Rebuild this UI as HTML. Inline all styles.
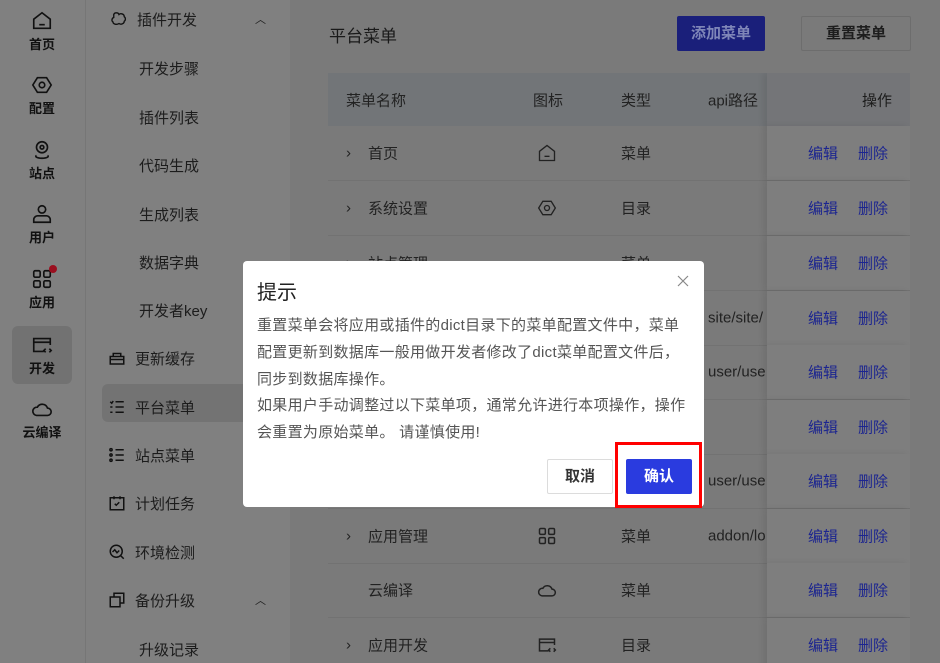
<!DOCTYPE html><html><head><meta charset="utf-8"><style>
*{box-sizing:border-box;margin:0;padding:0}
html,body{width:940px;height:663px;overflow:hidden}
body{position:relative;font-family:"Liberation Sans","Noto Sans CJK SC",sans-serif;background:#7b7b7b;color:#1a1a1a}
.abs{position:absolute}
.nav{left:0;top:0;width:86px;height:663px;background:#808080;border-right:1px solid #767676}
.ni{position:absolute;left:12px;width:60px;text-align:center;font-size:13px;color:#111;font-weight:bold}
.ni svg{display:block;margin:0 auto 2px}
.sub{left:86px;top:0;width:204px;height:663px;background:#808080}
.si{position:absolute;font-size:15px;color:#1c1c1c}
.si svg{vertical-align:-3px;margin-right:9px}
.main{left:290px;top:0;width:650px;height:663px;background:#7a7a7a}
.tbl{left:328px;top:73px;width:582px;height:590px;overflow:hidden}
.row{position:absolute;left:0;width:582px;height:55px;border-bottom:1px solid #727272;font-size:15px;color:#222}
.row span{position:absolute;top:50%;transform:translateY(-50%)}
.row span svg{display:block}
.op{position:absolute;left:439px;top:0;width:143px;height:100%;background:#7e7e7e;box-shadow:-4px 0 6px rgba(0,0,0,.08)}
.op b{position:absolute;top:50%;transform:translateY(-50%);font-weight:normal;color:#1c2590}
.dlg{left:243px;top:261px;width:461px;height:246px;background:#fff;border-radius:4px}
</style></head><body>
<div class="abs nav">
 <div class="ni" style="top:10px"><svg width="22" height="22" viewBox="0 0 24 24" fill="none" stroke="#111" stroke-width="1.8"><path d="M3 10l9-7 9 7v10H3z"/><path d="M9 16h6"/></svg>首页</div>
 <div class="ni" style="top:74px"><svg width="22" height="22" viewBox="0 0 24 24" fill="none" stroke="#111" stroke-width="1.8"><path d="M7 4h10l5 8-5 8H7l-5-8z"/><circle cx="12" cy="12" r="3"/></svg>配置</div>
 <div class="ni" style="top:139px"><svg width="22" height="22" viewBox="0 0 24 24" fill="none" stroke="#111" stroke-width="1.8"><circle cx="12" cy="9" r="6"/><circle cx="12" cy="9" r="2"/><path d="M6 18c-2 1 0 3 6 3s8-2 6-3"/></svg>站点</div>
 <div class="ni" style="top:203px"><svg width="22" height="22" viewBox="0 0 24 24" fill="none" stroke="#111" stroke-width="1.8"><circle cx="12" cy="7" r="4"/><path d="M3 21v-3c0-2 2-4 4-4h10c2 0 4 2 4 4v3z"/></svg>用户</div>
 <div class="ni" style="top:268px"><svg width="22" height="22" viewBox="0 0 24 24" fill="none" stroke="#111" stroke-width="1.8"><rect x="3" y="3" width="7" height="7" rx="1.5"/><rect x="14" y="3" width="7" height="7" rx="1.5"/><rect x="3" y="14" width="7" height="7" rx="1.5"/><rect x="14" y="14" width="7" height="7" rx="1.5"/></svg>应用<i class="abs" style="left:37px;top:-3px;width:8px;height:8px;border-radius:50%;background:#9a0f1f"></i></div>
 <div class="abs" style="left:12px;top:326px;width:60px;height:58px;background:#727272;border-radius:6px"></div>
 <div class="ni" style="top:334px"><svg width="22" height="22" viewBox="0 0 24 24" fill="none" stroke="#111" stroke-width="1.8"><path d="M21 12V5H3v14h11"/><path d="M3 9h18"/><path d="M16 16l-2 2 2 2M20 16l2 2-2 2"/></svg>开发</div>
 <div class="ni" style="top:398px"><svg width="22" height="22" viewBox="0 0 24 24" fill="none" stroke="#111" stroke-width="1.8"><path d="M6 19h12a4 4 0 0 0 0-8 6 6 0 0 0-11-1A4.5 4.5 0 0 0 6 19z"/></svg>云编译</div>
</div>
<div class="abs sub">
 <div class="si" style="left:24px;top:9px"><svg width="18" height="18" viewBox="0 0 24 24" fill="none" stroke="#111" stroke-width="1.8"><path d="M5 6c1-3 6-3 7 0 2-2 7-1 7 3 2 1 2 5 0 6 0 3-4 5-7 3-3 2-8 1-8-2-2-1-2-5 1-6z"/></svg>插件开发<span style="position:absolute;left:145px;top:2px;font-size:11px">︿</span></div>
 <div class="si" style="left:53px;top:58px">开发步骤</div>
 <div class="si" style="left:53px;top:107px">插件列表</div>
 <div class="si" style="left:53px;top:155px">代码生成</div>
 <div class="si" style="left:53px;top:204px">生成列表</div>
 <div class="si" style="left:53px;top:252px">数据字典</div>
 <div class="si" style="left:53px;top:300px">开发者key</div>
 <div class="si" style="left:22px;top:348px"><svg width="18" height="18" viewBox="0 0 24 24" fill="none" stroke="#111" stroke-width="2"><path d="M3 10h18v10H3zM7 10V6h10v4M3 14h18"/></svg>更新缓存</div>
 <div class="abs" style="left:16px;top:384px;width:188px;height:38px;background:#737373;border-radius:6px"></div>
 <div class="si" style="left:22px;top:397px"><svg width="18" height="18" viewBox="0 0 24 24" fill="none" stroke="#111" stroke-width="2"><path d="M10 5h11M10 12h11M10 19h11M3 5l2 2 2-3M3 12h3M3 19h3"/></svg>平台菜单</div>
 <div class="si" style="left:22px;top:445px"><svg width="18" height="18" viewBox="0 0 24 24" fill="none" stroke="#111" stroke-width="2"><path d="M10 5h11M10 12h11M10 19h11"/><circle cx="4" cy="5" r="1.5"/><circle cx="4" cy="12" r="1.5"/><circle cx="4" cy="19" r="1.5"/></svg>站点菜单</div>
 <div class="si" style="left:22px;top:493px"><svg width="18" height="18" viewBox="0 0 24 24" fill="none" stroke="#111" stroke-width="2"><rect x="3" y="5" width="18" height="16"/><path d="M8 3v4M16 3v4M9 13l2 2 4-4"/></svg>计划任务</div>
 <div class="si" style="left:22px;top:542px"><svg width="18" height="18" viewBox="0 0 24 24" fill="none" stroke="#111" stroke-width="2"><circle cx="11" cy="11" r="8"/><path d="M17 17l4 4M6 12l3-3 3 4 3-3"/></svg>环境检测</div>
 <div class="si" style="left:22px;top:590px"><svg width="18" height="18" viewBox="0 0 24 24" fill="none" stroke="#111" stroke-width="2"><rect x="3" y="8" width="13" height="13"/><path d="M8 8V3h13v13h-5"/></svg>备份升级<span style="position:absolute;left:147px;top:2px;font-size:11px">︿</span></div>
 <div class="si" style="left:53px;top:639px">升级记录</div>
</div>
<div class="abs main">
 <div class="abs" style="left:39px;top:22px;font-size:17px;color:#1a1a1a">平台菜单</div>
 <div class="abs" style="left:387px;top:16px;width:88px;height:35px;background:#1a1f7a;border-radius:2px;color:#7f86b8;font-size:15px;font-weight:bold;text-align:center;line-height:35px">添加菜单</div>
 <div class="abs" style="left:511px;top:16px;width:110px;height:35px;border:1px solid #6d6d6d;border-radius:2px;color:#1d1d1d;font-size:15px;font-weight:bold;text-align:center;line-height:33px">重置菜单</div>
</div>
<div class="abs tbl">
 <div class="row" style="top:0;height:53px;background:#727578;border:none"><span style="left:18px">菜单名称</span><span style="left:205px">图标</span><span style="left:293px">类型</span><span style="left:380px">api路径</span><div class="op" style="background:#747578"><b style="left:95px;color:#1c1c1c">操作</b></div></div>
 <div class="row" style="top:53px"><span style="left:18px">›</span><span style="left:40px">首页</span><span style="left:209px"><svg width="20" height="20" viewBox="0 0 24 24" fill="none" stroke="#222" stroke-width="1.6"><path d="M3 10l9-7 9 7v11H3z"/><path d="M9 16h6"/></svg></span><span style="left:293px">菜单</span><div class="op"><b style="left:41px">编辑</b><b style="left:91px">删除</b></div></div>
 <div class="row" style="top:108px"><span style="left:18px">›</span><span style="left:40px">系统设置</span><span style="left:209px"><svg width="20" height="20" viewBox="0 0 24 24" fill="none" stroke="#222" stroke-width="1.6"><path d="M7 4h10l5 8-5 8H7l-5-8z"/><circle cx="12" cy="12" r="3"/></svg></span><span style="left:293px">目录</span><div class="op"><b style="left:41px">编辑</b><b style="left:91px">删除</b></div></div>
 <div class="row" style="top:163px"><span style="left:18px">›</span><span style="left:40px">站点管理</span><span style="left:293px">菜单</span><div class="op"><b style="left:41px">编辑</b><b style="left:91px">删除</b></div></div>
 <div class="row" style="top:218px"><span style="left:380px">site/site/</span><div class="op"><b style="left:41px">编辑</b><b style="left:91px">删除</b></div></div>
 <div class="row" style="top:272px"><span style="left:380px">user/use</span><div class="op"><b style="left:41px">编辑</b><b style="left:91px">删除</b></div></div>
 <div class="row" style="top:327px"><div class="op"><b style="left:41px">编辑</b><b style="left:91px">删除</b></div></div>
 <div class="row" style="top:381px"><span style="left:380px">user/use</span><div class="op"><b style="left:41px">编辑</b><b style="left:91px">删除</b></div></div>
 <div class="row" style="top:436px"><span style="left:18px">›</span><span style="left:40px">应用管理</span><span style="left:209px"><svg width="20" height="20" viewBox="0 0 24 24" fill="none" stroke="#222" stroke-width="1.8"><rect x="3" y="3" width="7" height="7" rx="1.5"/><rect x="14" y="3" width="7" height="7" rx="1.5"/><rect x="3" y="14" width="7" height="7" rx="1.5"/><rect x="14" y="14" width="7" height="7" rx="1.5"/></svg></span><span style="left:293px">菜单</span><span style="left:380px">addon/lo</span><div class="op"><b style="left:41px">编辑</b><b style="left:91px">删除</b></div></div>
 <div class="row" style="top:490px"><span style="left:40px">云编译</span><span style="left:209px"><svg width="20" height="20" viewBox="0 0 24 24" fill="none" stroke="#222" stroke-width="1.8"><path d="M6 19h12a4 4 0 0 0 0-8 6 6 0 0 0-11-1A4.5 4.5 0 0 0 6 19z"/></svg></span><span style="left:293px">菜单</span><div class="op"><b style="left:41px">编辑</b><b style="left:91px">删除</b></div></div>
 <div class="row" style="top:545px"><span style="left:18px">›</span><span style="left:40px">应用开发</span><span style="left:209px"><svg width="20" height="20" viewBox="0 0 24 24" fill="none" stroke="#222" stroke-width="1.8"><path d="M21 12V5H3v14h11"/><path d="M3 9h18"/><path d="M16 16l-2 2 2 2M20 16l2 2-2 2"/></svg></span><span style="left:293px">目录</span><div class="op"><b style="left:41px">编辑</b><b style="left:91px">删除</b></div></div>
</div>
<div class="abs dlg">
 <div class="abs" style="left:14px;top:15px;font-size:20px;color:#222">提示</div>
 <svg class="abs" style="left:434px;top:14px" width="12" height="12" viewBox="0 0 12 12" stroke="#888" stroke-width="1.2"><path d="M1 1l10 10M11 1L1 11"/></svg>
 <div class="abs" style="left:14px;top:52px;width:450px;font-size:15px;line-height:26.8px;color:#555;white-space:nowrap;letter-spacing:0.3px">重置菜单会将应用或插件的dict目录下的菜单配置文件中，菜单<br>配置更新到数据库一般用做开发者修改了dict菜单配置文件后，<br>同步到数据库操作。<br>如果用户手动调整过以下菜单项，通常允许进行本项操作，操作<br>会重置为原始菜单。 请谨慎使用!</div>
 <div class="abs" style="left:304px;top:198px;width:66px;height:35px;border:1px solid #dcdcdc;border-radius:2px;text-align:center;line-height:33px;font-size:15px;color:#333;font-weight:bold">取消</div>
 <div class="abs" style="left:383px;top:198px;width:66px;height:35px;background:#2a3bdf;border-radius:2px;text-align:center;line-height:35px;font-size:15px;color:#fff;font-weight:bold">确认</div>
</div>
<div class="abs" style="left:615px;top:442px;width:87px;height:66px;border:3px solid #f00"></div>
</body></html>
